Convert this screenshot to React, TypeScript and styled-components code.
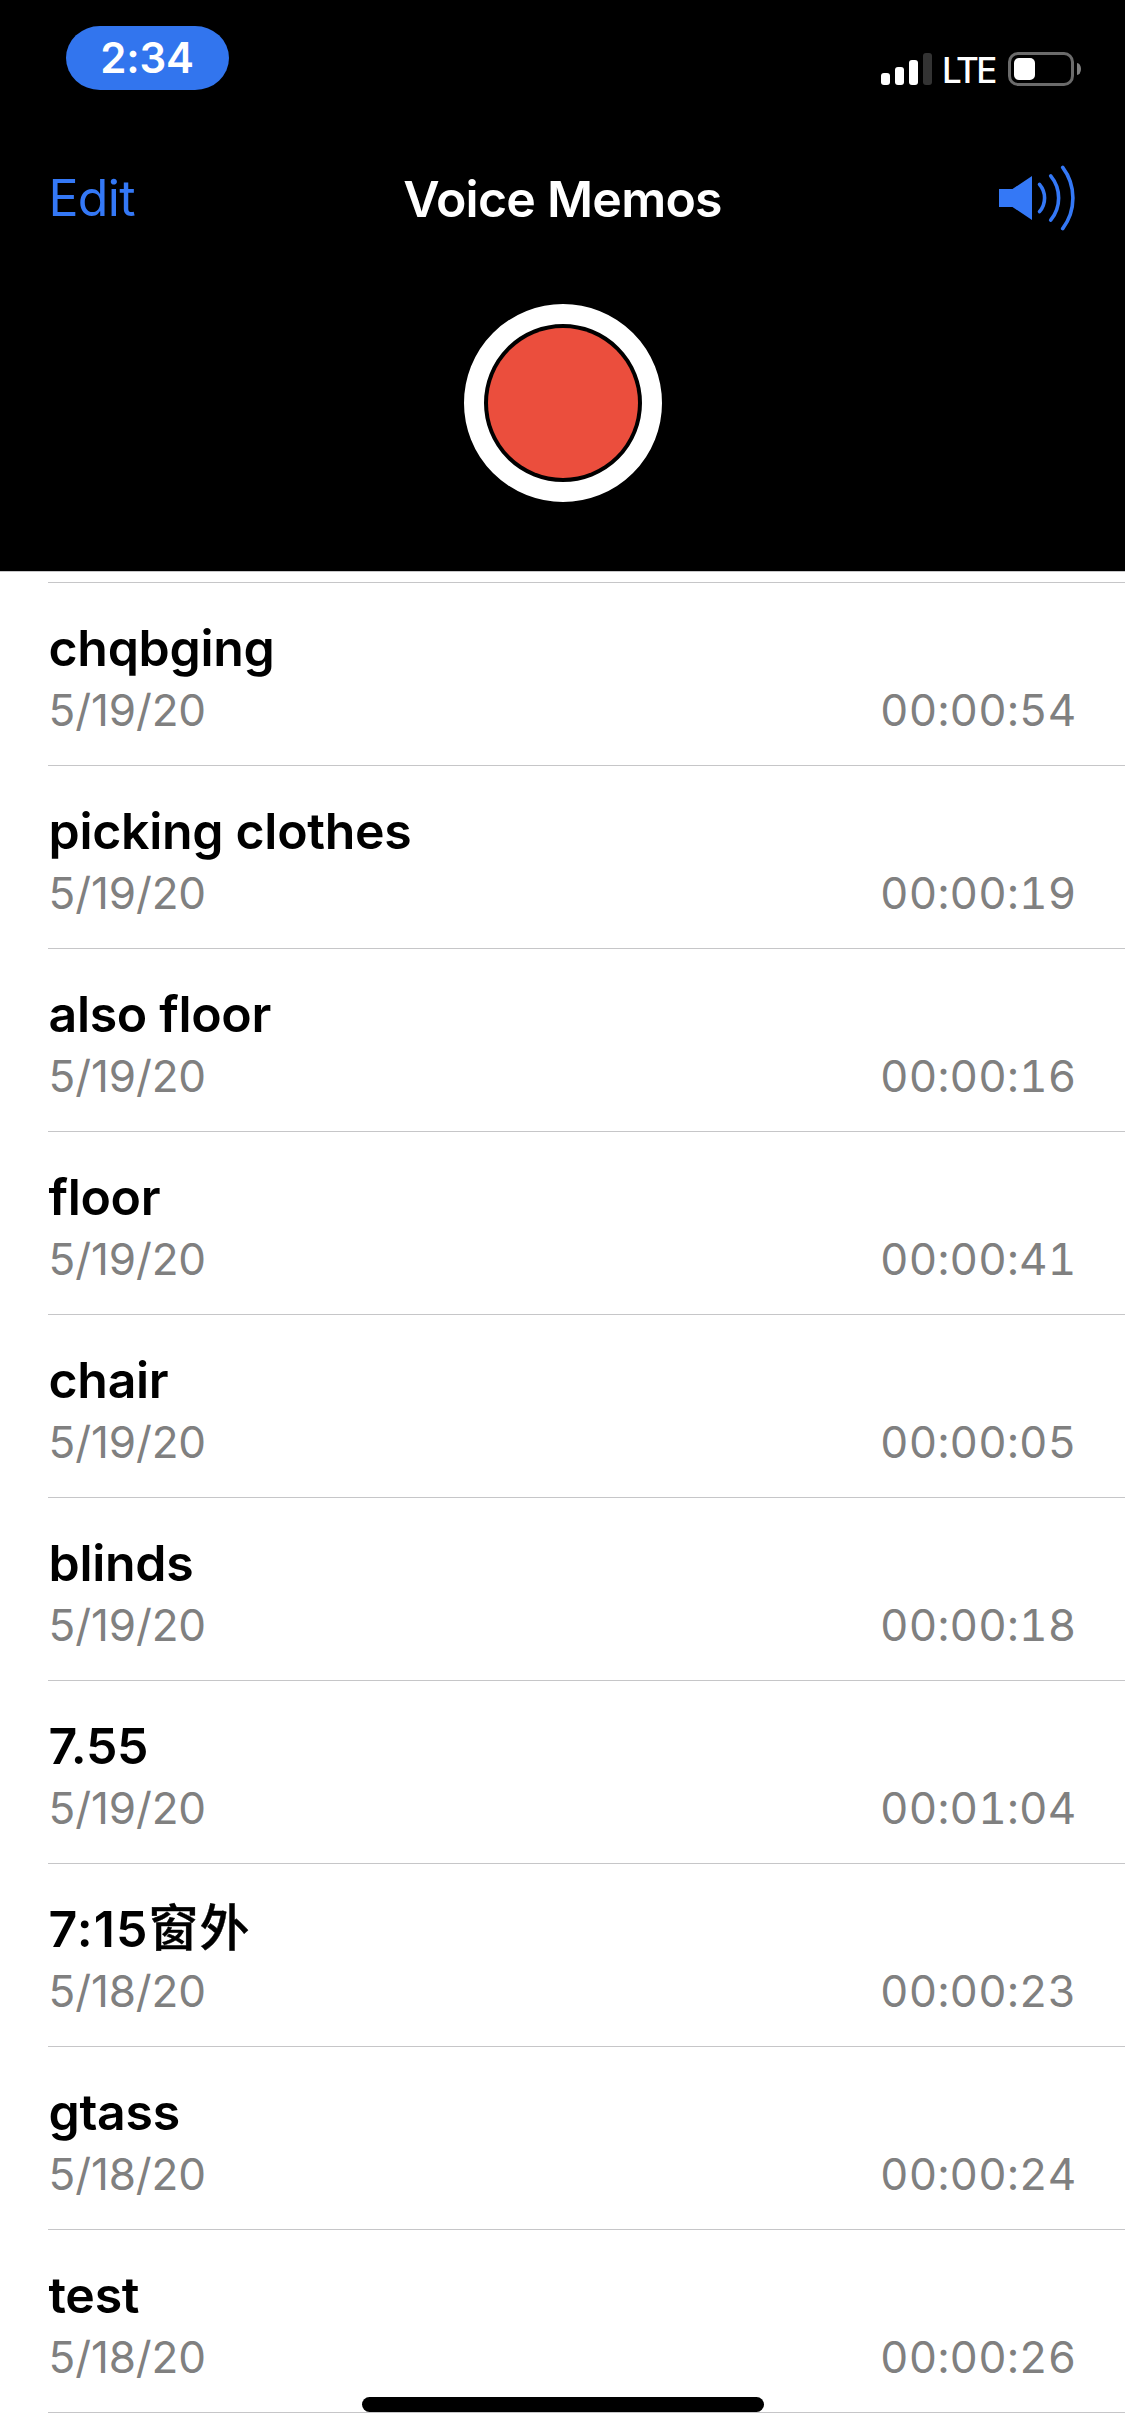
import React from "react";
import styled, { createGlobalStyle } from "styled-components";

const GlobalStyle = createGlobalStyle`
  * { box-sizing: border-box; }
  html, body { margin: 0; padding: 0; background: #fff; }
  body {
    font-family: Inter, "Liberation Sans", "Noto Sans CJK SC", sans-serif;
    overflow: hidden;
  }
`;

const Screen = styled.main`
  position: relative;
  display: flex;
  flex-direction: column;
  width: 1125px;
  height: 2436px;
  background: #fff;
  overflow: hidden;
`;

const Header = styled.header`
  display: flex;
  flex-direction: column;
  height: 572px;
  background: #000;
  border-bottom: 1px solid #c6c6c8;
`;

const StatusBar = styled.div`
  display: flex;
  justify-content: space-between;
  align-items: flex-start;
  height: 132px;
  padding: 26px 44px 0 65.5px;
`;

const TimePill = styled.div`
  width: 163px;
  height: 64px;
  border-radius: 34px / 32px;
  background: #3275ee;
  color: #fff;
  font-size: 42px;
  font-weight: 570;
  line-height: 64px;
  letter-spacing: -0.2px;
  text-align: center;
`;

const StatusIcons = styled.div`
  display: flex;
  align-items: center;
  height: 34px;
  margin-top: 26px;
`;

const SignalBars = styled.div`
  display: flex;
  align-items: flex-end;
  gap: 5px;
  height: 32px;
`;

const SignalBar = styled.span<{ $height: number; $active: boolean }>`
  width: 9px;
  height: ${(p) => p.$height}px;
  border-radius: 3px;
  background: ${(p) => (p.$active ? "#fff" : "#333")};
`;

const Carrier = styled.span`
  width: 76px;
  padding: 1px 0 0 10px;
  color: #fff;
  font-size: 35px;
  font-weight: 480;
  line-height: 34px;
  letter-spacing: -2.6px;
  white-space: nowrap;
`;

const Battery = styled.div`
  display: flex;
  width: 66px;
  height: 34px;
  padding: 3px;
  border: 3px solid #6b6b6b;
  border-radius: 10px;
`;

const BatteryLevel = styled.span`
  width: 21px;
  height: 22px;
  border-radius: 5px;
  background: #fff;
`;

const BatteryCap = styled.span`
  width: 4px;
  height: 12px;
  margin-left: 3px;
  border-radius: 0 4px 4px 0 / 0 6px 6px 0;
  background: #808080;
`;

const NavBar = styled.nav`
  display: grid;
  grid-template-columns: 1fr auto 1fr;
  align-items: center;
  height: 132px;
  padding: 0 48px;
`;

const EditButton = styled.button`
  justify-self: start;
  padding: 0 0 0 0.5px;
  border: 0;
  background: none;
  color: #3478f6;
  font: inherit;
  font-size: 50px;
  line-height: 60px;
  letter-spacing: -0.7px;
`;

const Title = styled.h1`
  margin: 0;
  padding-top: 2px;
  color: #fff;
  font-size: 50px;
  font-weight: 600;
  line-height: 60px;
  letter-spacing: -0.75px;
`;

const SpeakerButton = styled.button`
  display: flex;
  justify-self: end;
  padding: 0;
  border: 0;
  background: none;
`;

const RecordArea = styled.div`
  display: flex;
  justify-content: center;
  padding: 40px 0 0 1px;
`;

const RecordButton = styled.button`
  display: flex;
  width: 198px;
  height: 198px;
  padding: 4px;
  border: 20px solid #fff;
  border-radius: 50%;
  background: #000;
`;

const RecordDot = styled.span`
  flex: 1;
  border-radius: 50%;
  background: #eb4e3d;
`;

const MemoList = styled.ul`
  margin: 10px 0 0 48px;
  padding: 0;
  list-style: none;
  border-top: 1px solid #c6c6c8;
`;

const MemoRow = styled.li`
  display: flex;
  flex-direction: column;
  gap: 5px;
  height: 183px;
  padding: 35px 48.5px 0 0.5px;
  border-bottom: 1px solid #c6c6c8;
`;

const MemoName = styled.span<{ $tracking?: number }>`
  color: #000;
  font-size: 50px;
  font-weight: 600;
  line-height: 60px;
  letter-spacing: ${(p) => p.$tracking ?? -0.3}px;
`;

const HanText = styled.span`
  font-family: "Noto Sans CJK SC", sans-serif;
  font-weight: 500;
  line-height: 0;
  letter-spacing: 1px;
  vertical-align: 1px;
  -webkit-text-stroke: 0.4px #000;
`;

const MemoMeta = styled.div`
  display: flex;
  justify-content: space-between;
  color: #808080;
  font-size: 44px;
  line-height: 54px;
`;

const MemoDate = styled.span`
  letter-spacing: -0.1px;
`;

const MemoLength = styled.span`
  font-variant-numeric: tabular-nums;
  letter-spacing: 0.2px;
`;

const HomeIndicator = styled.div`
  position: absolute;
  left: 362px;
  bottom: 24px;
  width: 402px;
  height: 15px;
  border-radius: 7.5px;
  background: #000;
`;

const bars = [
  { height: 12, active: true },
  { height: 18, active: true },
  { height: 25, active: true },
  { height: 32, active: false },
];

type Memo = { name: string; han?: string; tracking?: number; date: string; length: string };

const memos: Memo[] = [
  { name: "chqbging", date: "5/19/20", length: "00:00:54" },
  { name: "picking clothes", date: "5/19/20", length: "00:00:19" },
  { name: "also floor", date: "5/19/20", length: "00:00:16" },
  { name: "floor", date: "5/19/20", length: "00:00:41" },
  { name: "chair", date: "5/19/20", length: "00:00:05" },
  { name: "blinds", date: "5/19/20", length: "00:00:18" },
  { name: "7.55", date: "5/19/20", length: "00:01:04" },
  { name: "7:15", han: "窗外", tracking: 1.1, date: "5/18/20", length: "00:00:23" },
  { name: "gtass", date: "5/18/20", length: "00:00:24" },
  { name: "test", date: "5/18/20", length: "00:00:26" },
];

function SpeakerIcon() {
  return (
    <svg width="78" height="66" viewBox="0 0 78 66" fill="none">
      <path d="M0 24H13.5L33 11V55L13.5 42H0Z" fill="#3478f6" />
      <g stroke="#3478f6" strokeWidth="3.6" strokeLinecap="round">
        <path d="M40.5 19.3A21 21 0 0 1 40.5 46.7" />
        <path d="M51.7 10.8A35 35 0 0 1 51.7 55.2" />
        <path d="M63.7 2.4A51 51 0 0 1 63.7 63.6" />
      </g>
    </svg>
  );
}

export default function App() {
  return (
    <Screen>
      <GlobalStyle />
      <Header>
        <StatusBar>
          <TimePill>2:34</TimePill>
          <StatusIcons>
            <SignalBars>
              {bars.map((bar) => (
                <SignalBar key={bar.height} $height={bar.height} $active={bar.active} />
              ))}
            </SignalBars>
            <Carrier>LTE</Carrier>
            <Battery>
              <BatteryLevel />
            </Battery>
            <BatteryCap />
          </StatusIcons>
        </StatusBar>
        <NavBar>
          <EditButton>Edit</EditButton>
          <Title>Voice Memos</Title>
          <SpeakerButton aria-label="Speaker">
            <SpeakerIcon />
          </SpeakerButton>
        </NavBar>
        <RecordArea>
          <RecordButton aria-label="Record">
            <RecordDot />
          </RecordButton>
        </RecordArea>
      </Header>
      <MemoList>
        {memos.map((memo) => (
          <MemoRow key={memo.name}>
            <MemoName $tracking={memo.tracking}>
              {memo.name}
              {memo.han && <HanText>{memo.han}</HanText>}
            </MemoName>
            <MemoMeta>
              <MemoDate>{memo.date}</MemoDate>
              <MemoLength>{memo.length}</MemoLength>
            </MemoMeta>
          </MemoRow>
        ))}
      </MemoList>
      <HomeIndicator />
    </Screen>
  );
}
